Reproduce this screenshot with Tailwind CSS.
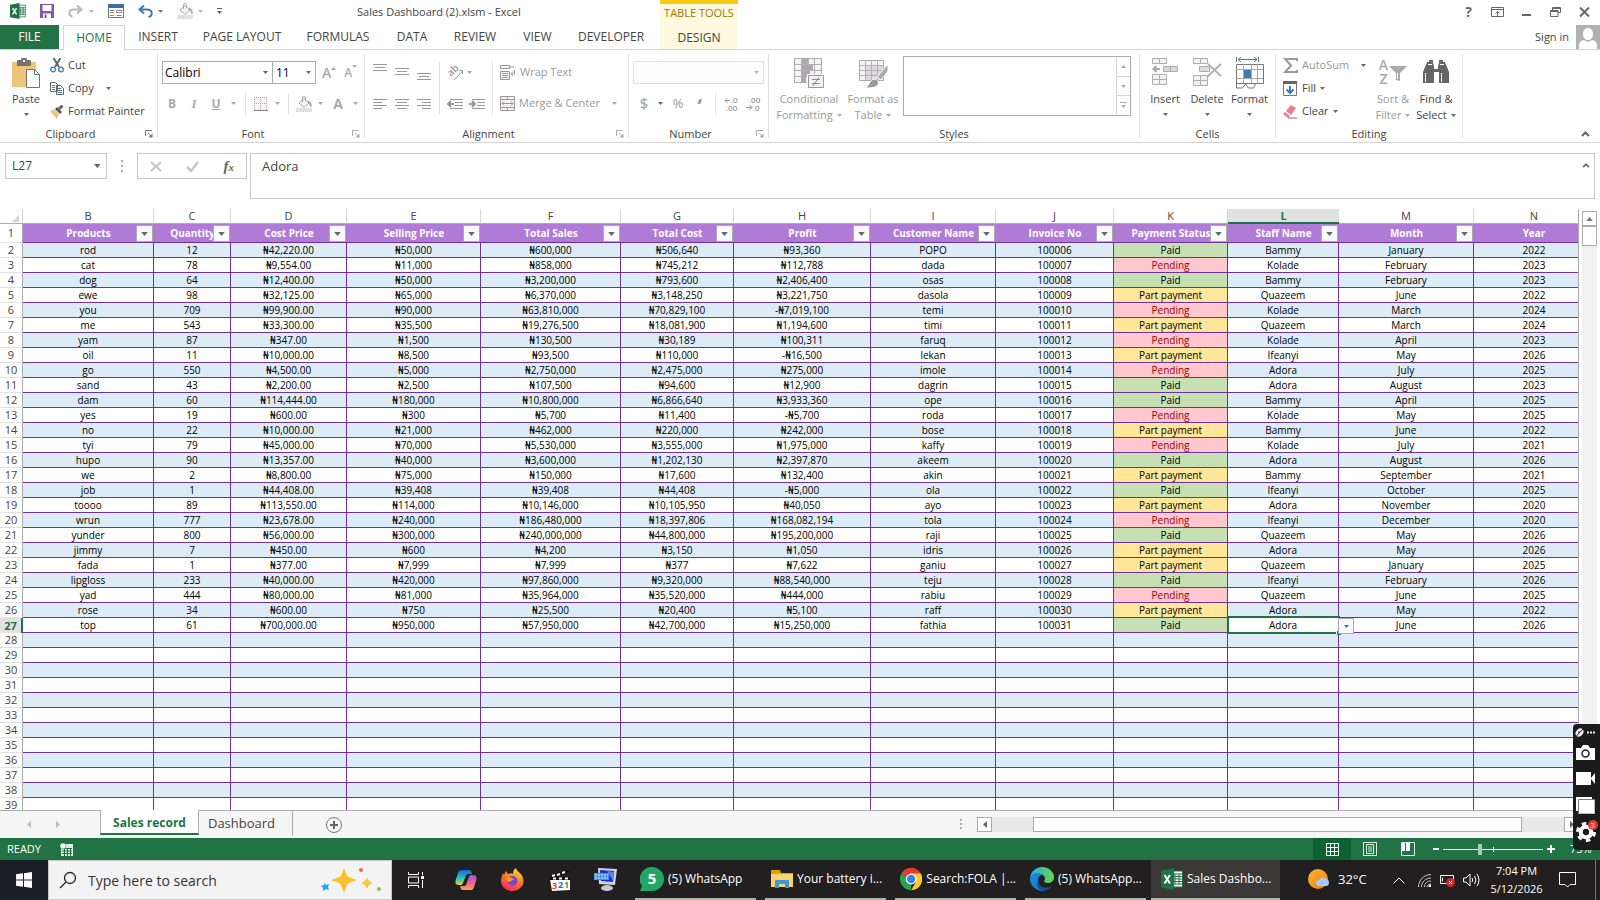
<!DOCTYPE html>
<html lang="en">
<head>
    <meta charset="UTF-8">
    <meta name="viewport" content="width=device-width, initial-scale=1.0">
    <title>Sales Dashboard (2).xlsm - Excel</title>
    <script src="https://cdn.jsdelivr.net/npm/@tailwindcss/browser@4"></script>
</head>
<body class="h-screen overflow-hidden flex flex-col bg-white text-[#444] text-[11px] font-['Open_Sans','Noto_Sans',sans-serif]">
    <!-- shared icons -->
    <svg class="hidden">
        <symbol id="caret" viewBox="0 0 5 3"><path d="M0 0h5L2.5 3z"/></symbol>
        <symbol id="launcher" viewBox="0 0 8 8"><path d="M.5 6V.5H7M3 3l3 3" fill="none" stroke="currentColor"/><path d="M7.5 3.5v4h-4z" fill="currentColor"/></symbol>
        <symbol id="bucket" viewBox="0 0 16 16"><path d="M0 12h16v4H0z" fill="#e3dee3"/><path d="M3 7l5-4.5L13 7l-5 4.5z" fill="#f5f1f5" stroke="currentColor"/><path d="M6.500 6V2a1.5 1.5 0 013 0v3" fill="none" stroke="currentColor"/><path d="M12 5c3 1 3.500 3 3 6-1-2-1-3-3-4z" fill="currentColor" stroke="currentColor"/></symbol>
        <symbol id="excel" viewBox="0 0 22 22"><path d="M11 3h10.5v16H11z" fill="#fff" stroke="#217346"/><path d="M14 5.5v11M18 5.5v11M12 6h9M12 8.5h9M12 11h9M12 13.5h9M12 16h9" stroke="#217346"/><path d="M0 2.5L13 0v22L0 19.5z" fill="#217346"/><path d="M3.5 7L9 15.5M9 7l-5.500 8.5" stroke="#fff" stroke-width="2"/></symbol>
    </svg>

    <header class="flex h-[50px] shrink-0 border-b border-[#d4d4d4]">
        <div class="w-[660px] flex flex-col">
            <div class="h-[25px] flex items-center pl-[10px] pb-[2px]">
                <svg class="size-4"><use href="#excel"/></svg>
                <svg class="w-[14px] h-[14px] ml-[14px]" viewBox="0 0 14 14"><path d="M0 0h14v14H0z" fill="#8a52a5"/><path d="M2.5 1h9v6h-9zM3 9.5h8V14H3z" fill="#fff"/><path d="M4.5 10.5h2V14h-2z" fill="#8a52a5"/></svg>
                <svg class="w-[15px] h-[13px] ml-[14px]" viewBox="0 0 15 13"><path d="M13 4.5H6C0 4.5 0 11 4.5 11.5M9 .5l4.5 4L9 8.5" fill="none" stroke="#b9b9b9" stroke-width="2"/></svg>
                <svg class="w-[5px] h-[3px] ml-[6px] fill-[#b9b9b9]"><use href="#caret"/></svg>
                <svg class="w-4 h-[14px] ml-[14px]" viewBox="0 0 16 14"><path d="M.5.5h15v13H.5z" fill="#fff" stroke="#777"/><path d="M0 0h16v4H0z" fill="#3e6fa3"/><path d="M2 6.5h4M2 8.5h4M2 11.5h4M8.500 6.5h5v2h-5zM8.500 11.5h5" stroke="#888" fill="none"/></svg>
                <svg class="w-[15px] h-[13px] ml-[14px]" viewBox="0 0 15 13"><path d="M2 4.5h7c6 0 6 6.5 1.5 7.5M6 .5L1.5 4.5 6 8.5" fill="none" stroke="#3e7ab5" stroke-width="2"/></svg>
                <svg class="w-[5px] h-[3px] ml-[5px] fill-[#777]"><use href="#caret"/></svg>
                <svg class="size-4 ml-[14px] text-[#b1acb1]"><use href="#bucket"/></svg>
                <svg class="w-[5px] h-[3px] ml-[5px] fill-[#b9b9b9]"><use href="#caret"/></svg>
                <svg class="w-[5px] h-[7px] ml-[14px] fill-[#666]" viewBox="0 0 5 7"><path d="M0 0h5v1H0zM0 3h5L2.5 6z"/></svg>
                <h1 class="ml-[135px] pt-px text-[11px] whitespace-nowrap">Sales Dashboard (2).xlsm - Excel</h1>
            </div>
            <nav class="flex h-[25px] text-xs">
                <button class="w-[59px] bg-[#217346] text-white">FILE</button>
                <button class="w-[62px] ml-1 pt-px border border-b-0 border-[#d4d4d4] bg-white text-[#217346] -mb-px">HOME</button>
                <button class="w-[66px] pt-px">INSERT</button>
                <button class="w-[102px] pt-px">PAGE LAYOUT</button>
                <button class="w-[90px] pt-px">FORMULAS</button>
                <button class="w-[58px] pt-px">DATA</button>
                <button class="w-[68px] pt-px">REVIEW</button>
                <button class="w-[57px] pt-px">VIEW</button>
                <button class="w-[90px] pt-px">DEVELOPER</button>
            </nav>
        </div>
        <div class="w-[78px] flex flex-col bg-[#fff9e0] border-t-4 border-[#f5cc14]">
            <span class="h-[21px] leading-[18px] text-[11px] text-center text-[#9a7800] whitespace-nowrap">TABLE TOOLS</span>
            <button class="flex-1 pt-px text-xs">DESIGN</button>
        </div>
        <div class="flex-1 flex flex-col">
            <div class="h-[25px] flex items-center justify-end gap-4 pr-[9px] pb-px text-[#666]">
                <button class="w-[13px] text-sm font-bold leading-4">?</button>
                <button aria-label="Ribbon display options"><svg class="w-[13px] h-[10px]" viewBox="0 0 13 10"><path d="M.5.5h12v9H.5zM.5 2.5h12M6.500 9V4.5M4.5 6.500l2-2 2 2" fill="none" stroke="currentColor"/></svg></button>
                <button aria-label="Minimize"><svg class="w-[13px] h-[10px]" viewBox="0 0 13 10"><path d="M2 7h9v2H2z" fill="currentColor"/></svg></button>
                <button aria-label="Restore"><svg class="w-[13px] h-[10px]" viewBox="0 0 13 10"><path d="M3.5 3V.5h8v5H9M1.5 3.5H9v6H1.5zM3.5 1.5h8M1.5 4.5H9" fill="none" stroke="currentColor"/></svg></button>
                <button aria-label="Close"><svg class="w-[13px] h-[10px]" viewBox="0 0 13 10"><path d="M2 .5l9 9M11 .5l-9 9" stroke="currentColor" stroke-width="2"/></svg></button>
            </div>
            <div class="h-[24px] flex items-center justify-end gap-[7px]">
                <a href="#" class="text-[11px]">Sign in</a>
                <svg class="size-6" viewBox="0 0 24 24"><path d="M0 0h24v24H0z" fill="#b1b1b1"/><path d="M12 3c3 0 5 2.5 5 6s-2 6-5 6-5-2.5-5-6 2-6 5-6zM3 24c0-6 0-8 5-9l4 2 4-2c5 1 5 3 5 9z" fill="#fff"/></svg>
            </div>
        </div>
    </header>

    <!-- ribbon -->
    <div class="flex h-[93px] shrink-0 border-b border-[#d4d4d4]">
        <section class="w-[157px] flex flex-col">
            <div class="flex-1 flex pt-1">
                <button class="w-[50px] flex flex-col items-center pt-1 pl-[2px]">
                    <svg class="w-[30px] h-[31px]" viewBox="0 0 30 31"><path d="M1 4h24v25H1z" fill="#edc679"/><path d="M6 2h4a3 3 0 016 0h4v6H6z" fill="#737373"/><path d="M12 2h2v2h-2z" fill="#fff"/><path d="M15.5 11.5h8l5 5v13h-13z" fill="#fff" stroke="#737373"/><path d="M23.5 11.5v5h5" fill="none" stroke="#737373"/></svg>
                    <span class="leading-5">Paste</span>
                    <svg class="w-[5px] h-[3px] mt-1 fill-[#666]"><use href="#caret"/></svg>
                </button>
                <div class="flex flex-col">
                    <button class="h-[23px] flex items-center gap-1">
                        <svg class="w-[14px] h-[15px]" viewBox="0 0 14 15"><path d="M3.5 0l5.5 9M10.5 0L5 9" stroke="#666" stroke-width="2"/><circle cx="3" cy="11.5" r="2.3" fill="none" stroke="#3e7ab5" stroke-width="1.3"/><circle cx="11" cy="11.5" r="2.3" fill="none" stroke="#3e7ab5" stroke-width="1.3"/></svg>
                        Cut
                    </button>
                    <button class="h-[23px] flex items-center gap-1">
                        <svg class="w-[14px] h-[13px]" viewBox="0 0 14 13"><path d="M.5.5h5l2 2v7h-7zM6.500 3.5h4l3 3v6h-7z" fill="#fff" stroke="#666"/><path d="M2 3.5h3M2 5.5h3M2 7.5h3M8 6.500h3M8 8.500h4M8 10.5h4" stroke="#3e7ab5"/></svg>
                        Copy
                        <svg class="w-[5px] h-[3px] ml-2 fill-[#666]"><use href="#caret"/></svg>
                    </button>
                    <button class="h-[23px] flex items-center gap-1 whitespace-nowrap">
                        <svg class="w-[14px] h-[14px]" viewBox="0 0 14 14"><path d="M0 6l4-2 5 5-2 5z" fill="#edc679"/><path d="M5 4l2-2 5 5-2 2z" fill="#555"/><path d="M9 4l3.5-3.5" stroke="#666" stroke-width="3"/></svg>
                        Format Painter
                    </button>
                </div>
            </div>
            <div class="h-4 flex items-center"><span class="flex-1 text-center pr-1">Clipboard</span><svg class="size-2 mr-1 text-[#777]"><use href="#launcher"/></svg></div>
        </section>
        <div class="w-px my-1 bg-[#e1e1e1]"></div>

        <section class="w-[206px] flex flex-col">
            <div class="flex-1 flex flex-col gap-2 pt-[11px] pl-1 text-[#aaa]">
                <div class="flex h-[23px] items-center">
                    <label class="flex items-center w-[111px] h-full border border-[#ababab] pr-1">
                        <select aria-label="Font" class="flex-1 appearance-none pl-[2px] text-black text-xs"><option>Calibri</option></select>
                        <svg class="w-[5px] h-[3px] fill-[#666]"><use href="#caret"/></svg>
                    </label>
                    <label class="flex items-center w-[43px] h-full border border-l-0 border-[#ababab] pr-1">
                        <select aria-label="Font size" class="flex-1 appearance-none pl-[3px] text-black text-xs"><option>11</option></select>
                        <svg class="w-[5px] h-[3px] fill-[#666]"><use href="#caret"/></svg>
                    </label>
                    <button class="flex ml-[6px] text-sm font-semibold leading-5">A<svg class="w-[5px] h-[3px] mt-1 rotate-180 fill-current"><use href="#caret"/></svg></button>
                    <button class="flex ml-2 text-xs font-semibold leading-5">A<svg class="w-[5px] h-[3px] mt-[2px] fill-current"><use href="#caret"/></svg></button>
                </div>
                <div class="flex h-[23px] items-center text-xs">
                    <button class="w-5 font-bold">B</button>
                    <button class="w-6 italic font-bold font-['Liberation_Serif',serif] text-[13px]">I</button>
                    <button class="w-5 font-bold underline">U</button>
                    <svg class="w-[5px] h-[3px] ml-[5px] fill-current"><use href="#caret"/></svg>
                    <div class="w-px h-[22px] ml-[9px] bg-[#e1e1e1]"></div>
                    <svg class="w-[14px] h-[14px] ml-2" viewBox="0 0 14 14"><path d="M0 0h14v14H0z" fill="#f5f1f5"/><path d="M.5 0v13M6.500 0v13M12.5 0v13M0 .5h14M0 6.500h14" stroke="#aaa" stroke-dasharray="1 1"/><path d="M0 13.5h14" stroke="#888"/></svg>
                    <svg class="w-[5px] h-[3px] ml-[7px] fill-current"><use href="#caret"/></svg>
                    <div class="w-px h-[22px] ml-2 bg-[#e1e1e1]"></div>
                    <svg class="size-4 ml-[7px]"><use href="#bucket"/></svg>
                    <svg class="w-[5px] h-[3px] ml-[6px] fill-current"><use href="#caret"/></svg>
                    <button class="w-[10px] ml-[10px] text-sm font-bold">A</button>
                    <svg class="w-[5px] h-[3px] ml-[10px] fill-current"><use href="#caret"/></svg>
                </div>
            </div>
            <div class="h-4 flex items-center"><span class="flex-1 text-center pr-1">Font</span><svg class="size-2 mr-1 text-[#aaa]"><use href="#launcher"/></svg></div>
        </section>
        <div class="w-px my-1 bg-[#e1e1e1]"></div>

        <section class="w-[263px] flex flex-col">
            <div class="flex-1 flex pt-[11px] pl-2 text-[#999]">
                <div class="w-[66px] flex flex-col gap-2">
                    <div class="h-[23px] flex gap-2 pt-[3px]">
                        <svg class="w-[14px] h-[16px]" viewBox="0 0 14 16"><path d="M0 .5h14M2 3.5h10M0 6.500h14" stroke="#999"/></svg>
                        <svg class="w-[14px] h-[16px]" viewBox="0 0 14 16"><path d="M0 4.5h14M2 7.5h10M0 10.5h14" stroke="#999"/></svg>
                        <svg class="w-[14px] h-[16px]" viewBox="0 0 14 16"><path d="M0 9.5h14M2 12.5h10M0 15.5h14" stroke="#999"/></svg>
                    </div>
                    <div class="h-[23px] flex items-center gap-2">
                        <svg class="w-[14px] h-[10px]" viewBox="0 0 14 10"><path d="M0 .5h14M0 3.5h9M0 6.500h14M0 9.5h9" stroke="#999"/></svg>
                        <svg class="w-[14px] h-[10px]" viewBox="0 0 14 10"><path d="M0 .5h14M2 3.5h10M0 6.500h14M2 9.5h10" stroke="#999"/></svg>
                        <svg class="w-[14px] h-[10px]" viewBox="0 0 14 10"><path d="M0 .5h14M5 3.5h9M0 6.500h14M5 9.5h9" stroke="#999"/></svg>
                    </div>
                </div>
                <div class="w-px h-[54px] bg-[#e1e1e1]"></div>
                <div class="w-[52px] flex flex-col gap-2 pl-[7px]">
                    <div class="h-[23px] flex items-center gap-1">
                        <svg class="w-4 h-[15px] overflow-visible" viewBox="0 0 16 15"><text transform="translate(4 12) rotate(-45)" font-size="10" font-weight="600" fill="#999">ab</text><path d="M7 15L15.5 6M12 5.5h3.5V9" fill="none" stroke="#999"/></svg>
                        <svg class="w-[5px] h-[3px] fill-[#aaa]"><use href="#caret"/></svg>
                    </div>
                    <div class="h-[23px] flex items-center gap-[6px]">
                        <svg class="w-4 h-[10px]" viewBox="0 0 16 10"><path d="M3 .5h13M8 3.5h8M8 6.500h8M3 9.5h13" stroke="#999"/><path d="M7 5H1M4 2L1 5l3 3" fill="none" stroke="#999" stroke-width="2"/></svg>
                        <svg class="w-4 h-[10px]" viewBox="0 0 16 10"><path d="M3 .5h13M8 3.5h8M8 6.500h8M3 9.5h13" stroke="#999"/><path d="M0 5h6M3 2l3 3-3 3" fill="none" stroke="#999" stroke-width="2"/></svg>
                    </div>
                </div>
                <div class="w-px h-[54px] bg-[#e1e1e1]"></div>
                <div class="flex flex-col gap-2 pl-[7px]">
                    <button class="h-[23px] flex items-center gap-1 whitespace-nowrap">
                        <svg class="w-4 h-[15px]" viewBox="0 0 16 15"><path d="M.5.5h9v3h-9zM.5 6.500h9v8h-9z" fill="#f5f1f5" stroke="#999"/><path d="M9 2h5M2 8.500h6M2 10.5h6M2 12.5h6M14.5 5v4H11M13 6.500L11 9l2 2" fill="none" stroke="#999"/></svg>
                        Wrap Text
                    </button>
                    <button class="h-[23px] flex items-center gap-1 whitespace-nowrap">
                        <svg class="w-[15px] h-[15px]" viewBox="0 0 15 15"><path d="M.5.5h14v14H.5z" fill="#f5f1f5" stroke="#999"/><path d="M0 3.5h15M0 11.5h15M7.5 0v3.5M7.5 11.5V15M2 7.5h11M4 5.5l-2 2 2 2M11 5.5l2 2-2 2" fill="none" stroke="#999"/></svg>
                        Merge &amp; Center
                        <svg class="w-[5px] h-[3px] ml-2 fill-[#aaa]"><use href="#caret"/></svg>
                    </button>
                </div>
            </div>
            <div class="h-4 flex items-center"><span class="flex-1 text-center pr-1">Alignment</span><svg class="size-2 mr-1 text-[#aaa]"><use href="#launcher"/></svg></div>
        </section>
        <div class="w-px my-1 bg-[#e1e1e1]"></div>

        <section class="w-[139px] flex flex-col">
            <div class="flex-1 flex flex-col gap-2 pt-[11px] px-1 text-[#999]">
                <label class="flex items-center h-[23px] border border-[#e1e1e1] bg-[#fdfdfd] pr-1">
                    <select aria-label="Number format" class="flex-1 appearance-none"><option></option></select>
                    <svg class="w-[5px] h-[3px] fill-[#bbb]"><use href="#caret"/></svg>
                </label>
                <div class="flex h-[23px] items-center">
                    <button class="w-[22px] text-[15px]">$</button>
                    <svg class="w-[5px] h-[3px] ml-[3px] fill-[#666]"><use href="#caret"/></svg>
                    <button class="w-[14px] ml-2 text-[13px]">%</button>
                    <button class="w-3 ml-[9px] text-xl leading-3 font-bold pb-5">,</button>
                    <div class="w-px h-[22px] ml-[9px] bg-[#e1e1e1]"></div>
                    <svg class="w-[15px] h-[14px] ml-2 overflow-visible" viewBox="0 0 15 14"><path d="M6 3.5H1M3.5 1L1 3.5 3.5 6" fill="none" stroke="#999"/><text x="7" y="6" font-size="8" fill="#777">.0</text><text x="2" y="14" font-size="8" fill="#777">.00</text></svg>
                    <svg class="w-[15px] h-[14px] ml-[7px] overflow-visible" viewBox="0 0 15 14"><path d="M0 10.5h6M3.5 8L6 10.5 3.5 13" fill="none" stroke="#999"/><text x="3" y="6" font-size="8" fill="#777">.00</text><text x="7" y="14" font-size="8" fill="#777">.0</text></svg>
                </div>
            </div>
            <div class="h-4 flex items-center"><span class="flex-1 text-center pr-1">Number</span><svg class="size-2 mr-1 text-[#aaa]"><use href="#launcher"/></svg></div>
        </section>
        <div class="w-px my-1 bg-[#e1e1e1]"></div>

        <section class="w-[370px] flex flex-col">
            <div class="flex-1 flex text-[#999]">
                <button class="w-[74px] ml-[3px] flex flex-col items-center pt-2 leading-4">
                    <svg class="w-[30px] h-[31px]" viewBox="0 0 30 31"><path d="M.5.5h27v24H.5z" fill="#f5f1f5" stroke="#aaa"/><path d="M8 1h6v5H8zM8 7h11v5H8zM8 13h8v5H8zM8 19h4v5H8z" fill="#aaa"/><path d="M7.5 0v24M14.5 0v6M20.5 0v24M0 6.500h27M0 12.5h27M0 18.5h27" stroke="#b5b0b5"/><path d="M13 16h17v15H13z" fill="#fff"/><path d="M14.5 17.5h15v12h-15z" fill="#f5f1f5" stroke="#999"/><path d="M18 21.5h8M18 25.5h8M25 19l-6 9" stroke="#888"/></svg>
                    <span class="pt-[2px]">Conditional</span>
                    <span class="flex items-center gap-1">Formatting<svg class="w-[5px] h-[3px] fill-[#aaa]"><use href="#caret"/></svg></span>
                </button>
                <button class="w-[54px] flex flex-col items-center pt-2 leading-4 whitespace-nowrap">
                    <svg class="w-[30px] h-[31px]" viewBox="0 0 30 31"><path d="M1.5 2.5h24v20h-24z" fill="#f5f1f5" stroke="#aaa"/><path d="M8 8h17v14H8z" fill="#dcd8dc"/><path d="M7.5 2v20M13.5 2v20M19.5 2v20M1 7.5h24M1 12.5h24M1 17.5h24" stroke="#b5b0b5"/><path d="M30 6L19 19l4 3 7-9z" fill="#aaa" stroke="#fff"/><path d="M7 30c4-1 4-8 9-9 4 0 6 4 3 7-3 2-8 2-12 2z" fill="#999" stroke="#fff"/></svg>
                    <span class="pt-[2px]">Format as</span>
                    <span class="flex items-center gap-1">Table<svg class="w-[5px] h-[3px] fill-[#aaa]"><use href="#caret"/></svg></span>
                </button>
                <div class="flex-1 flex h-[60px] mt-[6px] ml-[3px] mr-2 border border-[#ababab]">
                    <div class="flex-1"></div>
                    <div class="w-[14px] flex flex-col border-l border-[#d4d4d4] divide-y divide-[#d4d4d4]">
                        <button aria-label="Previous styles" class="flex-1 flex items-center justify-center"><svg class="w-[5px] h-[3px] rotate-180 fill-[#aaa]"><use href="#caret"/></svg></button>
                        <button aria-label="Next styles" class="flex-1 flex items-center justify-center"><svg class="w-[5px] h-[3px] fill-[#aaa]"><use href="#caret"/></svg></button>
                        <button aria-label="More styles" class="flex-1 flex items-center justify-center"><svg class="w-[7px] h-[7px] fill-[#aaa]" viewBox="0 0 7 7"><path d="M0 0h7v1H0zM1 3h5L3.5 6z"/></svg></button>
                    </div>
                </div>
            </div>
            <div class="h-4 text-center leading-4">Styles</div>
        </section>
        <div class="w-px my-1 bg-[#e1e1e1]"></div>

        <section class="w-[135px] flex flex-col">
            <div class="flex-1 flex pl-1">
                <button class="w-[42px] flex flex-col items-center pt-2 leading-4">
                    <svg class="w-[28px] h-[31px]" viewBox="0 0 28 31"><path d="M1.5.5h14v5h-14zM12.5 8.500h14v5h-14zM1.5 16.5h14v10h-14z" fill="#f5f1f5" stroke="#b1acb1"/><path d="M13 9h13v4H13z" fill="#dcd8dc"/><path d="M8.500 0v5M19.5 8v6M8.500 16v10M1 21.5h14" stroke="#b1acb1"/><path d="M9 11H3M5.5 8L2.5 11l3 3" fill="none" stroke="#aaa" stroke-width="2"/></svg>
                    <span class="pt-[2px]">Insert</span>
                    <svg class="w-[5px] h-[3px] mt-[6px] fill-[#666]"><use href="#caret"/></svg>
                </button>
                <button class="w-[42px] flex flex-col items-center pt-2 leading-4">
                    <svg class="w-[30px] h-[31px]" viewBox="0 0 30 31"><path d="M1.5.5h14v5h-14zM7.5 8.500h10v5h-10zM1.5 17.5h14v10h-14z" fill="#f5f1f5" stroke="#b1acb1"/><path d="M8 9h9v4H8z" fill="#dcd8dc"/><path d="M8.500 0v5M8.500 17v10M1 22.5h14" stroke="#b1acb1"/><path d="M16 6l13 12M29 6L15 19" stroke="#b5b0b5" stroke-width="2"/></svg>
                    <span class="pt-[2px]">Delete</span>
                    <svg class="w-[5px] h-[3px] mt-[6px] fill-[#666]"><use href="#caret"/></svg>
                </button>
                <button class="w-[43px] flex flex-col items-center pt-[7px] leading-4">
                    <svg class="w-[28px] h-[32px]" viewBox="0 0 28 32"><path d="M.5 0v5M22.5 0v5M2 2.5h19M5 0L2 2.5 5 5M18 0l3 2.5L18 5" fill="none" stroke="#3e7ab5"/><path d="M.5 7.5h27v19H.5z" fill="#fff" stroke="#777"/><path d="M7.5 7v19M15.5 7v19M21.5 7v19M0 12.5h27M0 21.5h27" stroke="#aaa"/><path d="M8 13h7v8H8z" fill="#3e7ab5"/><path d="M.5 26v5h6l3-4 3 4h5l2-4" fill="none" stroke="#777"/></svg>
                    <span class="pt-[2px]">Format</span>
                    <svg class="w-[5px] h-[3px] mt-[6px] fill-[#666]"><use href="#caret"/></svg>
                </button>
            </div>
            <div class="h-4 text-center leading-4">Cells</div>
        </section>
        <div class="w-px my-1 bg-[#e1e1e1]"></div>

        <section class="w-[186px] flex flex-col">
            <div class="flex-1 flex pl-[7px]">
                <div class="w-[87px] flex flex-col pt-1">
                    <button class="h-[23px] flex items-center gap-1 text-[#999]">
                        <svg class="w-[15px] h-[15px]" viewBox="0 0 15 15"><path d="M14 3V1H2l6 6.500L2 14h12v-2" fill="none" stroke="#999" stroke-width="2"/></svg>
                        AutoSum
                        <svg class="w-[5px] h-[3px] ml-2 fill-[#666]"><use href="#caret"/></svg>
                    </button>
                    <button class="h-[23px] flex items-center gap-1">
                        <svg class="w-[15px] h-[15px]" viewBox="0 0 15 15"><path d="M.5.5h13v14H.5z" fill="#fff" stroke="#777"/><path d="M0 0h14v3H0z" fill="#666"/><path d="M7 5v7M3.5 8.500L7 12l3.5-3.5" fill="none" stroke="#3e7ab5" stroke-width="2"/></svg>
                        Fill
                        <svg class="w-[5px] h-[3px] fill-[#666]"><use href="#caret"/></svg>
                    </button>
                    <button class="h-[23px] flex items-center gap-1">
                        <svg class="w-[15px] h-[14px]" viewBox="0 0 15 14"><path d="M8 0l5 3-5 7-5-4z" fill="#e8808f"/><path d="M2 7l5 4-2 2L0 9z" fill="#e8808f"/><path d="M5 13h9" stroke="#777"/></svg>
                        Clear
                        <svg class="w-[5px] h-[3px] fill-[#666]"><use href="#caret"/></svg>
                    </button>
                </div>
                <button class="w-[46px] flex flex-col items-center pt-2 leading-4 text-[#999] whitespace-nowrap">
                    <span class="flex w-[30px] h-[31px] overflow-visible">
                        <span class="w-[11px] flex flex-col text-sm leading-[14px] font-semibold text-[#aaa]"><span>A</span><span>Z</span></span>
                        <svg class="w-[18px] h-[24px]" viewBox="0 0 18 24"><path d="M0 8h18l-7 7v8l-4-1v-7z" fill="#aaa"/><path d="M8.500 15v6" stroke="#fff"/></svg>
                    </span>
                    <span class="pt-[2px]">Sort &amp;</span>
                    <span class="flex items-center gap-1">Filter<svg class="w-[5px] h-[3px] fill-[#aaa]"><use href="#caret"/></svg></span>
                </button>
                <button class="w-[40px] flex flex-col items-center pt-2 leading-4 whitespace-nowrap">
                    <svg class="w-[26px] h-[31px]" viewBox="0 0 26 31"><path d="M0 25V14L4 4h2V2h4v3l1 3v3h4V8l1-3V2h4v2h2l4 10v11h-10V14h-5v11z" fill="#666"/><path d="M2.5 15v9M18.5 15v9M5 6.500h4M17 6.500h4" stroke="#fff"/></svg>
                    <span class="pt-[2px]">Find &amp;</span>
                    <span class="flex items-center gap-1">Select<svg class="w-[5px] h-[3px] fill-[#666]"><use href="#caret"/></svg></span>
                </button>
            </div>
            <div class="h-4 text-center leading-4">Editing</div>
        </section>
        <div class="w-px my-1 bg-[#e1e1e1]"></div>
        <div class="flex-1 flex items-end justify-end pr-[10px] pb-[5px]">
            <button aria-label="Collapse the ribbon"><svg class="w-[9px] h-[6px]" viewBox="0 0 9 6"><path d="M1 5l3.5-3.5L8 5" fill="none" stroke="#666" stroke-width="2"/></svg></button>
        </div>
    </div>

    <!-- formula bar -->
    <div class="flex h-[66px] shrink-0 items-start pt-[10px] pl-[5px] pr-[5px]">
        <label class="flex items-center w-[102px] h-[26px] border border-[#c6c6c6] pr-[6px]">
            <input aria-label="Name Box" value="L27" class="w-full pl-[6px] text-xs outline-none">
            <svg class="w-[7px] h-[4px] fill-[#666]" viewBox="0 0 5 3"><use href="#caret"/></svg>
        </label>
        <svg class="w-[2px] h-[12px] mx-[14px] mt-[7px]" viewBox="0 0 2 12"><path d="M0 0h2v2H0zM0 5h2v2H0zM0 10h2v2H0z" fill="#aaa"/></svg>
        <div class="flex w-[110px] h-[26px] items-center justify-around border border-[#c6c6c6]">
            <button aria-label="Cancel"><svg class="w-[12px] h-[11px]" viewBox="0 0 12 11"><path d="M1 1l10 9M11 1L1 10" stroke="#c6c6c6" stroke-width="2"/></svg></button>
            <button aria-label="Enter"><svg class="w-[13px] h-[11px]" viewBox="0 0 13 11"><path d="M1 6l4 4 7-9" fill="none" stroke="#c6c6c6" stroke-width="2.5"/></svg></button>
            <button class="font-['Liberation_Serif',serif] italic font-bold text-[15px] leading-4 text-[#666]">f<span class="text-[11px]">x</span></button>
        </div>
        <div class="flex-1 flex h-[46px] ml-[3px] border border-[#c6c6c6]">
            <textarea aria-label="Formula Bar" class="flex-1 resize-none px-[11px] pt-[3px] text-[13px] leading-[18px] outline-none">Adora</textarea>
            <button aria-label="Collapse formula bar" class="self-start mt-[9px] mr-1"><svg class="w-[8px] h-[5px]" viewBox="0 0 9 6"><path d="M1 5l3.5-3.5L8 5" fill="none" stroke="#666" stroke-width="2"/></svg></button>
        </div>
    </div>

    <!-- worksheet -->
    <main class="flex-1 min-h-0 flex border-b border-[#ababab]">
        <div class="flex-1 min-w-0 overflow-hidden border-r border-[#ababab]">
            <table class="w-full table-fixed border-separate border-spacing-0 text-center text-black text-[10px] leading-[14px]">
                <colgroup>
                    <col class="w-[23px]"><col class="w-[131px]"><col class="w-[77px]"><col class="w-[116px]"><col class="w-[134px]"><col class="w-[140px]"><col class="w-[113px]"><col class="w-[137px]"><col class="w-[125px]"><col class="w-[118px]"><col class="w-[114px]"><col class="w-[111px]"><col class="w-[135px]"><col>
                </colgroup>
                <thead id="letters"></thead>
                <tbody id="rows"></tbody>
            </table>
        </div>
        <div class="w-[15px] ml-[3px] mr-[3px] mt-[2px] flex flex-col bg-[#f1f1f1]">
            <button aria-label="Scroll up" class="h-[15px] flex items-center justify-center border border-[#ababab] bg-white"><svg class="w-[7px] h-[4px] rotate-180 fill-[#777]" viewBox="0 0 5 3"><use href="#caret"/></svg></button>
            <div class="h-5 border border-[#ababab] bg-white"></div>
        </div>
    </main>

    <!-- sheet tabs -->
    <div class="flex h-[27px] shrink-0 bg-[#f5f5f5] text-[13px]">
        <div class="w-[100px] flex items-center gap-[25px] pl-[27px]">
            <svg class="w-1 h-[7px]" viewBox="0 0 4 7"><path d="M4 0v7L0 3.5z" fill="#bbb"/></svg>
            <svg class="w-1 h-[7px]" viewBox="0 0 4 7"><path d="M0 0v7l4-3.5z" fill="#bbb"/></svg>
        </div>
        <button class="w-[99px] h-[25px] -mt-px pt-[2px] border-x border-x-[#ababab] border-b-2 border-b-[#217346] bg-white text-[#217346] text-xs font-bold">Sales record</button>
        <button class="w-[94px] h-[25px] border-r border-[#ababab] pr-2">Dashboard</button>
        <button aria-label="New sheet" class="ml-[33px]"><svg class="size-4" viewBox="0 0 16 16"><circle cx="8" cy="8" r="7.5" fill="none" stroke="#777"/><path d="M8 4v8M4 8h8" stroke="#666" stroke-width="2"/></svg></button>
        <div class="flex-1"></div>
        <div class="w-[640px] flex items-center pr-[21px] pb-px">
            <svg class="w-[2px] h-[10px]" viewBox="0 0 2 10"><path d="M0 0h2v2H0zM0 4h2v2H0zM0 8h2v2H0z" fill="#aaa"/></svg>
            <button aria-label="Scroll left" class="w-[15px] h-[15px] ml-[15px] flex items-center justify-center border border-[#ababab] bg-white"><svg class="w-1 h-[7px]" viewBox="0 0 4 7"><path d="M4 0v7L0 3.5z" fill="#666"/></svg></button>
            <div class="flex-1 h-[15px] flex bg-[#e8e8e8] pl-[41px] pr-[42px]"><div class="flex-1 border border-[#ababab] bg-white"></div></div>
            <button aria-label="Scroll right" class="w-[15px] h-[15px] flex items-center justify-center border border-[#ababab] bg-white"><svg class="w-1 h-[7px]" viewBox="0 0 4 7"><path d="M0 0v7l4-3.5z" fill="#666"/></svg></button>
        </div>
    </div>

    <!-- status bar -->
    <div class="flex h-[22px] shrink-0 items-center bg-[#217346] text-white text-[11px]">
        <span class="w-[60px] pl-[7px]">READY</span>
        <svg class="w-[13px] h-[13px]" viewBox="0 0 13 13"><path d="M1 1h12v12H1z" fill="#d9efe1"/><path d="M2 5.5h10M2 8h10M2 10.5h10M4.5 5v8M7.5 5v8M10.5 5v8" stroke="#217346"/><circle cx="3" cy="3" r="3" fill="#fff" stroke="#217346" stroke-width=".5"/></svg>
        <div class="flex-1"></div>
        <button aria-label="Normal view" class="w-[38px] h-full flex items-center justify-center bg-[#0c6433]"><svg class="size-[13px]" viewBox="0 0 13 13"><path d="M.5.5h12v12H.5zM4.5 0v13M8.500 0v13M0 4.5h13M0 8.500h13" fill="none" stroke="#fff"/></svg></button>
        <button aria-label="Page layout view" class="w-[38px] h-full flex items-center justify-center"><svg class="size-[14px]" viewBox="0 0 14 14"><path d="M.5.5h13v13H.5zM3.5 2.5h7v9h-7zM5 5h4M5 7h4M5 9h4" fill="none" stroke="#d9efe1"/></svg></button>
        <button aria-label="Page break preview" class="w-[38px] h-full flex items-center justify-center"><svg class="size-[14px]" viewBox="0 0 14 14"><path d="M.5.5h13v13H.5z" fill="none" stroke="#d9efe1"/><path d="M1 1h3v8H1zM5 1h4v8H5z" fill="#fff"/></svg></button>
        <button aria-label="Zoom out" class="w-[6px] ml-[6px]"><svg class="w-[6px] h-[2px]"><path d="M0 0h6v2H0z" fill="#fff"/></svg></button>
        <div class="relative w-[100px] ml-1 flex items-center">
            <input type="range" aria-label="Zoom" min="0" max="100" value="36" class="w-full h-px appearance-none bg-white [&::-webkit-slider-thumb]:appearance-none [&::-webkit-slider-thumb]:w-1 [&::-webkit-slider-thumb]:h-[11px] [&::-webkit-slider-thumb]:bg-[#a3d0b6]">
            <div class="absolute left-1/2 -top-[2px] w-px h-[5px] bg-white"></div>
        </div>
        <button aria-label="Zoom in" class="ml-1"><svg class="size-2" viewBox="0 0 8 8"><path d="M3 0h2v3h3v2H5v3H3V5H0V3h3z" fill="#fff"/></svg></button>
        <span class="w-[45px] pl-[15px]">75%</span>
    </div>

    <!-- taskbar -->
    <footer class="flex h-10 shrink-0 bg-[#211f1f] text-white text-xs">
        <button aria-label="Start" class="w-12 flex items-center justify-center bg-[#1b1f29]"><svg class="size-4" viewBox="0 0 16 16"><path d="M0 2.3l7-1v6.200H0zM8 1.2L16 0v7.5H8zM0 8.500h7v6.200l-7-1zM8 8.500h8V16l-8-1.2z" fill="#fff"/></svg></button>
        <label class="w-[344px] flex items-center bg-[#f3f3f3] border border-[#c8c8c8] pl-[10px] pr-[9px]">
            <svg class="size-[18px]" viewBox="0 0 18 18"><circle cx="11" cy="7" r="5.5" fill="none" stroke="#222" stroke-width="1.3"/><path d="M7 11L1 17" stroke="#222" stroke-width="1.3"/></svg>
            <input aria-label="Search" placeholder="Type here to search" class="flex-1 min-w-0 ml-[11px] pt-px text-sm outline-none placeholder:text-[#333]">
            <svg class="w-[62px] h-[26px]" viewBox="0 0 62 26"><path d="M24 2c2 6 3 8 4 8 2 1 4 2 8 3-4 1-6 2-8 3-1 1-2 3-4 9-2-6-3-8-4-9-2-1-4-2-8-3 4-1 6-2 8-3 1 0 2-2 4-8z" fill="#fbc02d" stroke="#fbc02d" stroke-linejoin="round"/><path d="M47 11c1 3 2 4 5 5-3 1-4 2-5 5-1-3-2-4-5-5 3-1 4-2 5-5z" fill="#fcc732" stroke="#fcc732"/><path d="M4 16l2 2 3-1-1 3 1 3-3-1-3 2v-3l-2-2 3-1z" fill="#1ba8f0"/><circle cx="41" cy="3" r="2" fill="#f4693b"/><circle cx="59" cy="22" r="2" fill="#8bc34a"/></svg>
        </label>
        <button aria-label="Task view" class="w-12 flex items-center justify-center"><svg class="size-4" viewBox="0 0 16 16"><path d="M.5 0v2.5h10V0M.5 5h10v6H.5zM.5 16v-2.5h10V16M14.5 0v3M14.5 8v8" fill="none" stroke="#fff"/><path d="M13 4h3v3h-3z" fill="#fff"/></svg></button>
        <button aria-label="Copilot" class="w-[47px] flex items-center justify-center pl-1">
            <svg class="size-[22px]" viewBox="0 0 22 22"><defs><linearGradient id="cp1" x2="0" y2="1"><stop stop-color="#1668d8"/><stop offset=".5" stop-color="#24b9c9"/><stop offset="1" stop-color="#d9d837"/></linearGradient><linearGradient id="cp2" x2="0" y2="1"><stop stop-color="#9b55e0"/><stop offset=".5" stop-color="#ec5f96"/><stop offset="1" stop-color="#fba34b"/></linearGradient></defs><path d="M6 1h8c2 0 2 1 3 4h-4c-2 0-2 1-3 4l-2 5c-1 2-1 2-4 2-4 0-4-3-3-6l2-6c1-2 1-3 3-3z" fill="url(#cp1)"/><path d="M16 21H8c-2 0-2-1-3-4h4c2 0 2-1 3-4l2-5c1-2 1-2 4-2 4 0 4 3 3 6l-2 6c-1 2-1 3-3 3z" fill="url(#cp2)"/></svg>
        </button>
        <button aria-label="Firefox" class="w-[47px] flex items-center justify-center pl-1">
            <svg class="w-[23px] h-[24px]" viewBox="0 0 23 24"><defs><linearGradient id="ff" x1=".8" x2=".3" y2="1"><stop stop-color="#ffe22e"/><stop offset=".5" stop-color="#ff7d23"/><stop offset="1" stop-color="#f6246b"/></linearGradient></defs><path d="M2 5l1 2 2-4 2 3c3-1 4-1 5 0 0-3 1-5 3-6 0 3 6 5 7 10 2 7-3 13-11 13C4 23 0 18 0 13c0-3 1-5 2-8z" fill="url(#ff)"/><circle cx="11.5" cy="13" r="5" fill="#7b45d6"/><path d="M5 9c3 0 6 0 8 3-3 0-3 2-5 2s-3-2-3-5z" fill="#ff9a25"/></svg>
        </button>
        <button aria-label="Media Player Classic" class="w-[47px] flex items-center justify-center pl-1">
            <svg class="size-[22px] overflow-visible" viewBox="0 0 22 22"><path d="M1 10h20v11l-18 1z" fill="#fff"/><path d="M1 6l19-5v3L2 9zM1 8h20v3H1z" fill="#111"/><path d="M3 7l3-1M8 6l3-1M13 4l3-1M4 9.5h3M10 9.5h3M16 9.5h3" stroke="#fff" stroke-width="2"/><g font-size="9" font-weight="700"><text x="3" y="20" fill="#d4502a">3</text><text x="9" y="19" fill="#2a6fd4">2</text><text x="15" y="19" fill="#3a9a3a">1</text></g></svg>
        </button>
        <button aria-label="On-Screen Keyboard" class="w-[46px] flex items-center justify-center pl-[2px]">
            <svg class="size-6" viewBox="0 0 24 24"><path d="M5 0l19 1-2 16-16-1z" fill="#cfd4dc"/><path d="M7 2l14 1-1 11-12-1z" fill="#1631c9"/><path d="M14 3l7 1-1 9z" fill="#5f7ff0"/><ellipse cx="14" cy="20" rx="6" ry="3" fill="#c6c9ce"/><path d="M1 5h15v7H1z" fill="#4a94e0"/><path d="M2 7h13M2 10h13" stroke="#d5ebff" stroke-dasharray="2 1"/></svg>
        </button>
        <div class="flex gap-[9px] ml-[8px]">
            <button class="w-[121px] flex items-center gap-1 pl-[5px] border-b-2 border-[#b5b1af] whitespace-nowrap">
                <svg class="size-6" viewBox="0 0 24 24"><path d="M12 0a12 12 0 110 24H0l2-5A12 12 0 0112 0z" fill="#23a566"/><text x="12" y="17" font-size="15" font-weight="700" text-anchor="middle" fill="#fff">5</text></svg>
                (5) WhatsApp
            </button>
            <button class="w-[121px] flex items-center gap-1 pl-[6px] border-b-2 border-[#b5b1af] whitespace-nowrap">
                <svg class="w-[22px] h-[18px]" viewBox="0 0 22 18"><path d="M0 0h9l1 3h12v14H0z" fill="#e0a000"/><path d="M0 4h22v13H0z" fill="#fdd365"/><path d="M4 18v-8h14v8h-4v-4H8v4z" fill="#3a96dd"/></svg>
                Your battery i...
            </button>
            <button class="w-[121px] flex items-center gap-1 pl-[5px] border-b-2 border-[#b5b1af] whitespace-nowrap">
                <svg class="size-6" viewBox="0 0 24 24"><path d="M12 12L1.6 6A12 12 0 0122.4 6z" fill="#e33b2e"/><path d="M12 12L1.6 6A12 12 0 0012 24z" fill="#2da24c"/><path d="M12 6h10.400A12 12 0 0112 24l5-9z" fill="#fcc934"/><circle cx="12" cy="12" r="5.8" fill="#fff"/><circle cx="12" cy="12" r="4.5" fill="#3f7fea"/></svg>
                Search:FOLA |...
            </button>
            <button class="w-[121px] flex items-center gap-1 pl-[5px] border-b-2 border-[#b5b1af] whitespace-nowrap">
                <svg class="size-6" viewBox="0 0 24 24"><defs><linearGradient id="ed"><stop stop-color="#29a8e8"/><stop offset="1" stop-color="#62d94c"/></linearGradient></defs><path d="M0 11C1 4 6 0 12 0c7 0 12 5 12 10 0 4-3 6-6 6s-4-1-4-2c1-1 1-2 1-3-1-5-10-6-15 0z" fill="url(#ed)"/><path d="M0 12c0-4 4-6 8-6 2 0 4 1 5 2-4 0-5 3-5 6 0 5 4 9 8 10C8 25 0 20 0 12z" fill="#1783d8"/><path d="M9 12c-2 7 5 11 13 7-3 4-7 5-10 5-5-2-7-8-3-12z" fill="#14519c"/></svg>
                (5) WhatsApp...
            </button>
        </div>
        <button class="w-[129px] ml-[5px] flex items-center gap-1 pl-[10px] bg-[#3b3837] border-b-2 border-[#b5b1af] whitespace-nowrap">
            <svg class="size-[22px]"><use href="#excel"/></svg>
            Sales Dashbo...
        </button>
        <div class="flex-1"></div>
        <div class="flex items-center">
            <button class="flex items-center gap-[7px]">
                <svg class="w-[23px] h-[22px]" viewBox="0 0 23 22"><defs><linearGradient id="sun" x2="1" y2="1"><stop stop-color="#fbb829"/><stop offset="1" stop-color="#ee7a1c"/></linearGradient></defs><circle cx="10" cy="10" r="10" fill="url(#sun)"/><path d="M11 17a3 3 0 010-6 5 5 0 018-1 4 4 0 010 7z" fill="#a8c8fa"/></svg>
                <span class="w-[55px] text-left text-[13px]">32°C</span>
            </button>
            <svg class="w-[12px] h-[7px]" viewBox="0 0 12 7"><path d="M.5 6.500L6 1l5.5 5.5" fill="none" stroke="#fff"/></svg>
            <svg class="w-[13px] h-[13px] ml-[13px]" viewBox="0 0 13 13"><path d="M.5 13C.5 6 6 .5 13 .5M3.5 13c0-5 4-9 9.500-9M6.500 13c0-4 3-6 6.500-6M9 13c0-2 2-3 4-3" fill="none" stroke="#ccc"/><circle cx="12" cy="12" r="1.5" fill="#fff"/></svg>
            <svg class="w-[15px] h-[13px] ml-[9px]" viewBox="0 0 15 13"><path d="M.5 1.5h13v8H.5z" fill="none" stroke="#fff"/><path d="M2 3.5h1v4H2z" fill="#fff"/><circle cx="10.5" cy="8.500" r="4.5" fill="#d9252f"/><path d="M9 7l3 3M12 7l-3 3" stroke="#fff"/></svg>
            <svg class="w-[17px] h-[14px] ml-[8px]" viewBox="0 0 17 14"><path d="M.5 5H3l4-4v12L3 9H.5zM9 5q1.5 2 0 4M11.5 3q3 4 0 8M14 1q4 6 0 12" fill="none" stroke="#fff"/></svg>
            <div class="w-[73px] text-center leading-[18px] text-[11px]">7:04 PM<br>5/12/2026</div>
            <svg class="w-[17px] h-[16px] ml-[6px] mr-[19px]" viewBox="0 0 17 16"><path d="M.5.5h16v12H11L8.500 15 6 12.5H.5z" fill="none" stroke="#fff"/></svg>
            <div class="w-[5px] h-10 border-l border-[#777]"></div>
        </div>
    </footer>

    <!-- floating capture toolbar -->
    <aside class="absolute right-0 bottom-[50px] w-[27px] h-[126px] flex flex-col items-center rounded-l bg-[#1b1b1b] pt-1 pr-[2px]">
        <svg class="w-[21px] h-[9px]" viewBox="0 0 21 9"><ellipse cx="4.5" cy="4.5" rx="3.5" ry="4.5" fill="#eee" transform="rotate(40 4.5 4.5)"/><path d="M1 8.500L8 1M3 4h2" stroke="#222"/><path d="M12 3.5h2v2h-2zM15 3.5h2v2h-2zM18 3.5h2v2h-2z" fill="#eee"/></svg>
        <button aria-label="Take screenshot" class="mt-2"><svg class="w-[19px] h-[15px]" viewBox="0 0 19 15"><path d="M0 3h5l2-3h5l2 3h5v12H0z" fill="#fff"/><circle cx="9.5" cy="8.500" r="3.5" fill="none" stroke="#222" stroke-width="1.5"/></svg></button>
        <button aria-label="Record video" class="mt-3"><svg class="w-[19px] h-[13px]" viewBox="0 0 19 13"><path d="M0 0h15v13H0zM15 6l4-5v11l-4-5z" fill="#fff"/></svg></button>
        <button aria-label="Gallery" class="mt-3"><svg class="w-[19px] h-[17px]" viewBox="0 0 19 17"><path d="M0 0h16v14H0z" fill="#fff"/><path d="M2.5 2.5H19V17H2.5z" fill="#fff" stroke="#777"/></svg></button>
        <button aria-label="Settings" class="relative mt-2">
            <svg class="size-5" viewBox="0 0 19 19"><circle cx="9.5" cy="9.5" r="5" fill="none" stroke="#fff" stroke-width="4"/><circle cx="9.5" cy="9.5" r="8" fill="none" stroke="#fff" stroke-width="3" stroke-dasharray="4.2 4.18"/></svg>
            <span class="absolute -top-[2px] -right-[2px] size-[10px] rounded-full bg-[#e53935] text-white text-[8px] leading-[10px] text-center">3</span>
        </button>
    </aside>

    <script>
        const letters = ['B', 'C', 'D', 'E', 'F', 'G', 'H', 'I', 'J', 'K', 'L', 'M', 'N'];
        const headings = ['Products', 'Quantity', 'Cost Price', 'Selling Price', 'Total Sales', 'Total Cost', 'Profit', 'Customer Name', 'Invoice No', 'Payment Status', 'Staff Name', 'Month', 'Year'];
        const sales = `rod|12|₦42,220.00|₦50,000|₦600,000|₦506,640|₦93,360|POPO|100006|Paid|Bammy|January|2022
cat|78|₦9,554.00|₦11,000|₦858,000|₦745,212|₦112,788|dada|100007|Pending|Kolade|February|2023
dog|64|₦12,400.00|₦50,000|₦3,200,000|₦793,600|₦2,406,400|osas|100008|Paid|Bammy|February|2023
ewe|98|₦32,125.00|₦65,000|₦6,370,000|₦3,148,250|₦3,221,750|dasola|100009|Part payment|Quazeem|June|2022
you|709|₦99,900.00|₦90,000|₦63,810,000|₦70,829,100|-₦7,019,100|temi|100010|Pending|Kolade|March|2024
me|543|₦33,300.00|₦35,500|₦19,276,500|₦18,081,900|₦1,194,600|timi|100011|Part payment|Quazeem|March|2024
yam|87|₦347.00|₦1,500|₦130,500|₦30,189|₦100,311|faruq|100012|Pending|Kolade|April|2023
oil|11|₦10,000.00|₦8,500|₦93,500|₦110,000|-₦16,500|lekan|100013|Part payment|Ifeanyi|May|2026
go|550|₦4,500.00|₦5,000|₦2,750,000|₦2,475,000|₦275,000|imole|100014|Pending|Adora|July|2025
sand|43|₦2,200.00|₦2,500|₦107,500|₦94,600|₦12,900|dagrin|100015|Paid|Adora|August|2023
dam|60|₦114,444.00|₦180,000|₦10,800,000|₦6,866,640|₦3,933,360|ope|100016|Paid|Bammy|April|2025
yes|19|₦600.00|₦300|₦5,700|₦11,400|-₦5,700|roda|100017|Pending|Kolade|May|2025
no|22|₦10,000.00|₦21,000|₦462,000|₦220,000|₦242,000|bose|100018|Part payment|Bammy|June|2022
tyi|79|₦45,000.00|₦70,000|₦5,530,000|₦3,555,000|₦1,975,000|kaffy|100019|Pending|Kolade|July|2021
hupo|90|₦13,357.00|₦40,000|₦3,600,000|₦1,202,130|₦2,397,870|akeem|100020|Paid|Adora|August|2026
we|2|₦8,800.00|₦75,000|₦150,000|₦17,600|₦132,400|akin|100021|Part payment|Bammy|September|2021
job|1|₦44,408.00|₦39,408|₦39,408|₦44,408|-₦5,000|ola|100022|Paid|Ifeanyi|October|2025
toooo|89|₦113,550.00|₦114,000|₦10,146,000|₦10,105,950|₦40,050|ayo|100023|Part payment|Adora|November|2020
wrun|777|₦23,678.00|₦240,000|₦186,480,000|₦18,397,806|₦168,082,194|tola|100024|Pending|Ifeanyi|December|2020
yunder|800|₦56,000.00|₦300,000|₦240,000,000|₦44,800,000|₦195,200,000|raji|100025|Paid|Quazeem|May|2026
jimmy|7|₦450.00|₦600|₦4,200|₦3,150|₦1,050|idris|100026|Part payment|Adora|May|2026
fada|1|₦377.00|₦7,999|₦7,999|₦377|₦7,622|ganiu|100027|Part payment|Quazeem|January|2025
lipgloss|233|₦40,000.00|₦420,000|₦97,860,000|₦9,320,000|₦88,540,000|teju|100028|Paid|Ifeanyi|February|2026
yad|444|₦80,000.00|₦81,000|₦35,964,000|₦35,520,000|₦444,000|rabiu|100029|Pending|Quazeem|June|2025
rose|34|₦600.00|₦750|₦25,500|₦20,400|₦5,100|raff|100030|Part payment|Adora|May|2022
top|61|₦700,000.00|₦950,000|₦57,950,000|₦42,700,000|₦15,250,000|fathia|100031|Paid|Adora|June|2026`.split('\n').map(line => line.split('|'));

        const statusColors = {
            'Paid': 'bg-[#c6e0b4]',
            'Pending': 'bg-[#ffc7ce] text-[#9c0006]',
            'Part payment': 'bg-[#ffe699]',
        };
        const caret = '<svg class="w-[7px] h-[4px] fill-[#666]" viewBox="0 0 5 3"><use href="#caret"/></svg>';

        const letterCell = (letter) => letter === 'L'
            ? `<th scope="col" class="h-[15px] p-0 bg-[#e1e1e1] border-b-2 border-[#217346] text-[#217346]">${letter}</th>`
            : `<th scope="col" class="h-[15px] p-0 pb-px font-normal border-b border-b-[#ababab] border-r border-r-[#d4d4d4] last:border-r-0 last:pl-4">${letter}</th>`;

        document.getElementById('letters').innerHTML = `<tr class="text-[#444] text-[11px] leading-3">
            <th class="h-[15px] p-0 border-b border-b-[#ababab] border-r border-r-[#d4d4d4]"><svg class="size-[7px] ml-[12px] mt-1" viewBox="0 0 7 7"><path d="M7 0v7H0z" fill="#d4d4d4"/></svg></th>
            ${letters.map(letterCell).join('')}</tr>`;

        const rowNumber = (n) => n === 27
            ? `<th scope="row" class="h-[15px] p-0 bg-[#e1e1e1] border-r-2 border-[#217346] text-[#217346] text-[11px]">${n}</th>`
            : `<th scope="row" class="h-[15px] p-0 bg-white font-normal text-[#444] text-[11px] border-r border-r-[#ababab] border-b border-b-[#e1e1e1]">${n}</th>`;

        const headingCell = (text, i) => `<th class="relative h-[19px] p-0 bg-[#b07bd7] border-b border-[#7030a0] text-white font-bold last:pl-4">${text}${
            i < 12 ? `<button aria-label="Filter ${text}" class="absolute right-px top-px size-[17px] flex items-center justify-center border border-[#ababab] bg-[#f8f9fc]">${caret}</button>` : ''}</th>`;

        const dataCell = (text, i, n) => {
            const selected = n === 27 && i === 10;
            const color = i === 9 ? (statusColors[text] || '') : '';
            return `<td class="h-[15px] p-0 border-r border-b border-[#7030a0] last:border-r-0 last:pl-4 ${selected ? 'relative' : ''} ${color}">${text}${selected ? `
                <span class="absolute -left-px -right-[2px] -top-[2px] -bottom-[2px] border-2 border-[#217346]"></span>
                <span class="absolute -right-[3px] -bottom-[3px] size-[5px] bg-[#217346] border-t border-l border-white"></span>
                <button aria-label="Pick from list" class="absolute left-full top-0 size-4 flex items-center justify-center border border-[#ababab] bg-[#f8f9fc]"><svg class="w-[5px] h-[3px] fill-[#666]"><use href="#caret"/></svg></button>` : ''}</td>`;
        };

        let html = `<tr>${rowNumber(1)}${headings.map(headingCell).join('')}</tr>`;
        for (let n = 2; n <= 39; n++) {
            const cells = sales[n - 2] || letters.map(() => '');
            html += `<tr class="font-medium ${n % 2 === 0 ? 'bg-[#ddebf7]' : 'bg-white'}">${rowNumber(n)}${cells.map((text, i) => dataCell(text, i, n)).join('')}</tr>`;
        }
        document.getElementById('rows').innerHTML = html;
    </script>
</body>
</html>
